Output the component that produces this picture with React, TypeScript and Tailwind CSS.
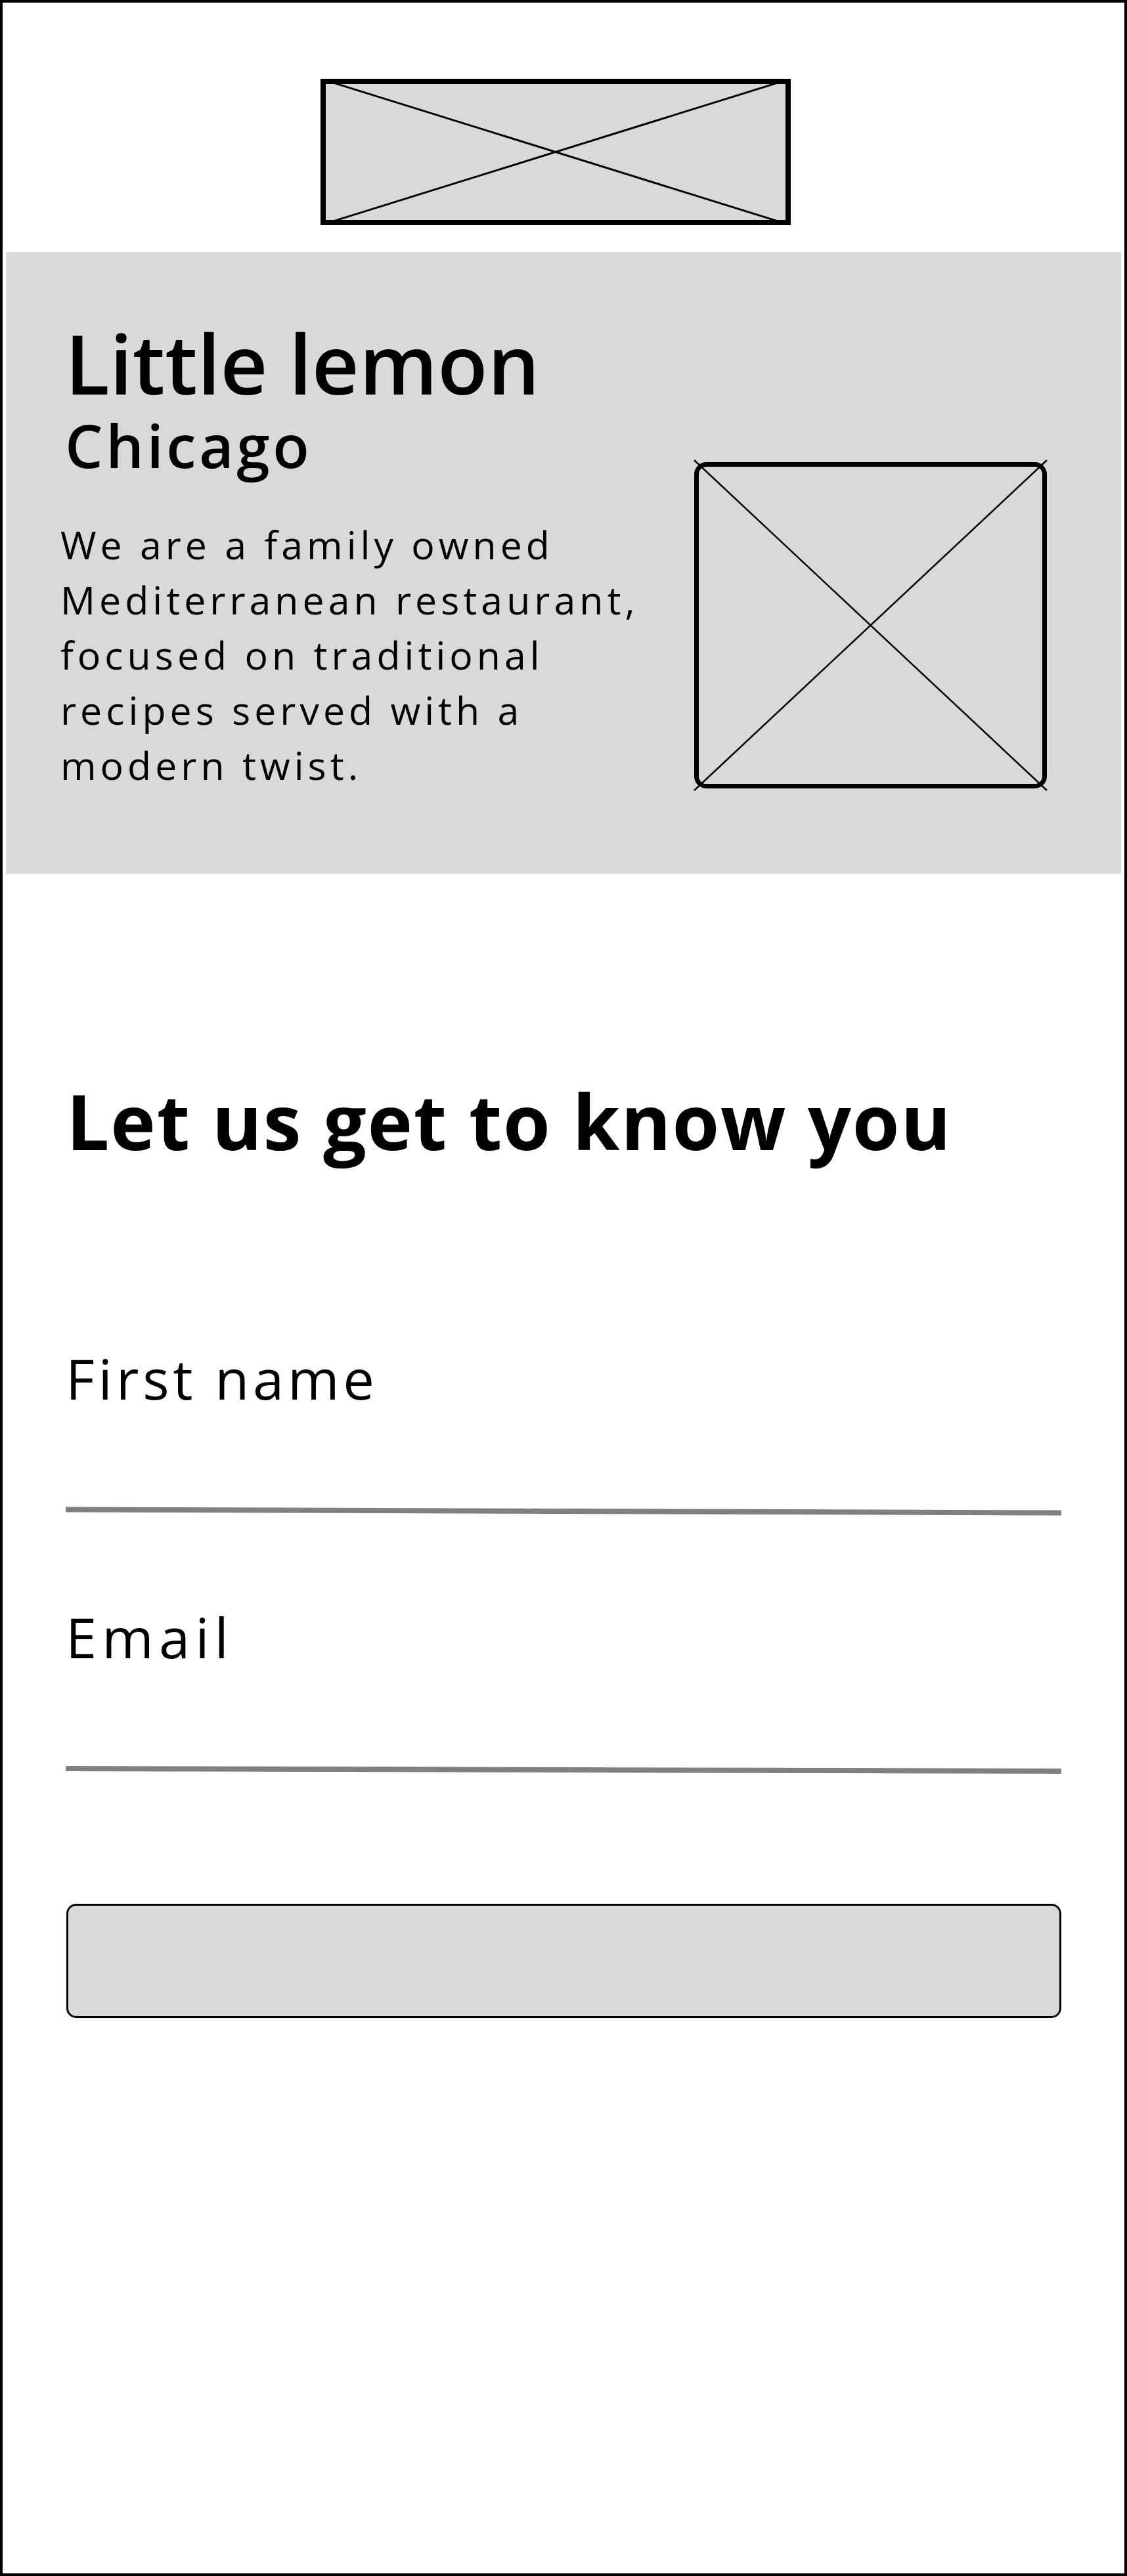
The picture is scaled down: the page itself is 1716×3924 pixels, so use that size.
import React from 'react';

const LogoPlaceholder: React.FC = () => (
  <svg width="716" height="223" viewBox="0 0 716 223" className="block">
    <rect x="0" y="0" width="716" height="223" fill="#d9d9d9" />
    <line x1="0" y1="0" x2="716" y2="223" stroke="black" strokeWidth="3" />
    <line x1="0" y1="223" x2="716" y2="0" stroke="black" strokeWidth="3" />
    <rect x="4" y="4" width="708" height="215" fill="none" stroke="black" strokeWidth="8" />
  </svg>
);

const HeroPlaceholder: React.FC = () => (
  <svg width="537" height="497" viewBox="0 0 537 497" overflow="visible" className="block">
    <rect x="3.5" y="3.5" width="530" height="490" rx="15" fill="#d9d9d9" stroke="black" strokeWidth="7" />
    <line x1="0" y1="-3" x2="537" y2="500" stroke="black" strokeWidth="2.5" />
    <line x1="537" y1="-3" x2="0" y2="500" stroke="black" strokeWidth="2.5" />
  </svg>
);

export default function App() {
  return (
    <div className="w-[1716px] h-[3924px] border-4 border-black bg-white text-black font-['Open_Sans','Liberation_Sans',sans-serif]">
      <header className="pt-[116px] pl-[484px]">
        <LogoPlaceholder />
      </header>

      <section className="mx-[5px] mt-[41px] h-[947px] bg-[#d9d9d9] pt-[106px] flex justify-between items-start">
        <div className="pl-[90px]">
          <h1 className="text-[125px] leading-[125px] font-semibold">Little lemon</h1>
          <h2 className="mt-[18px] text-[91px] leading-[90px] font-semibold tracking-[4.5px]">Chicago</h2>
          <p className="mt-[64px] -ml-[7px] text-[59px] leading-[84px] font-medium tracking-[6px]">
            We are a family owned
            <br />
            Mediterranean restaurant,
            <br />
            focused on traditional
            <br />
            recipes served with a
            <br />
            modern twist.
          </p>
        </div>
        <div className="mt-[214px] mr-[113px]">
          <HeroPlaceholder />
        </div>
      </section>

      <main className="px-[96px]">
        <h2 className="mt-[318px] pl-[1px] text-[116px] leading-[116px] font-bold tracking-[1.8px]">
          Let us get to know you
        </h2>

        <form className="flex flex-col" onSubmit={(e) => e.preventDefault()}>
          <label className="mt-[292px] text-[85px] leading-[85px] font-normal tracking-[5.7px]">First name</label>
          <div className="mt-[156px] h-[8px] bg-[#808080] rotate-[0.19deg]" />

          <label className="mt-[145px] text-[85px] leading-[85px] font-normal tracking-[8px]">Email</label>
          <div className="mt-[156px] h-[8px] bg-[#808080] rotate-[0.15deg]" />

          <button
            type="submit"
            className="mt-[200px] ml-[1px] h-[174px] rounded-[15px] border-[3px] border-black bg-[#d9d9d9]"
          />
        </form>
      </main>
    </div>
  );
}
